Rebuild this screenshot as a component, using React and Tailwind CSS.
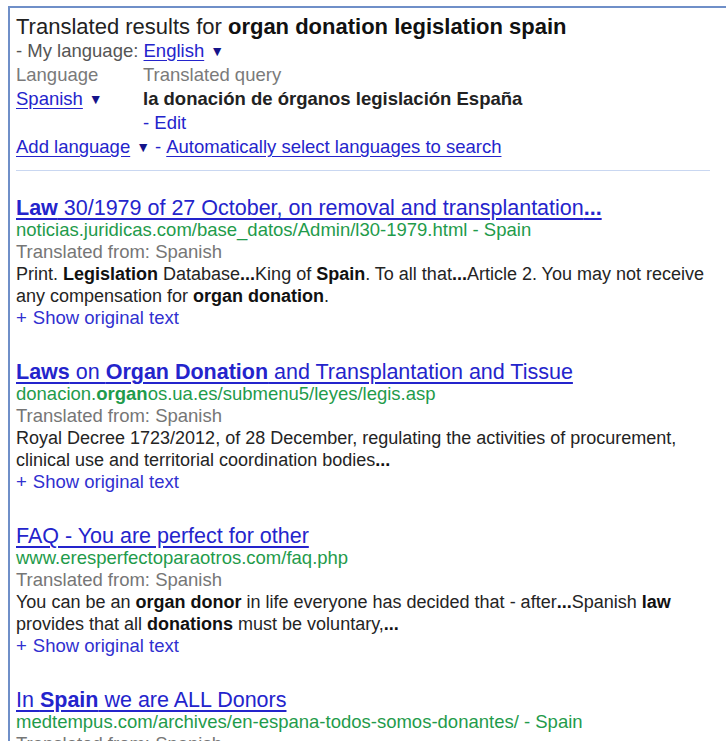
const results = [
  {
    title: [['Law', true], [' 30/1979 of 27 October, on removal and transplantation', false], ['...', true]],
    url: [['noticias.juridicas.com/base_datos/Admin/l30-1979.html - Spain', false]],
    snippet: [
      ['Print. ', false], ['Legislation', true], [' Database', false], ['...', true], ['King of ', false],
      ['Spain', true], ['. To all that', false], ['...', true], ['Article 2. You may not receive any compensation for ', false],
      ['organ donation', true], ['.', false],
    ],
  },
  {
    title: [['Laws', true], [' on ', false], ['Organ Donation', true], [' and Transplantation and Tissue', false]],
    url: [['donacion.', false], ['organ', true], ['os.ua.es/submenu5/leyes/legis.asp', false]],
    snippet: [
      ['Royal Decree 1723/2012, of 28 December, regulating the activities of procurement, clinical use and territorial coordination bodies', false],
      ['...', true],
    ],
  },
  {
    title: [['FAQ - You are perfect for other', false]],
    url: [['www.eresperfectoparaotros.com/faq.php', false]],
    snippet: [
      ['You can be an ', false], ['organ donor', true], [' in life everyone has decided that - after', false], ['...', true],
      ['Spanish ', false], ['law', true], [' provides that all ', false], ['donations', true], [' must be voluntary,', false], ['...', true],
    ],
  },
  {
    title: [['In ', false], ['Spain', true], [' we are ALL Donors', false]],
    url: [['medtempus.com/archives/en-espana-todos-somos-donantes/ - Spain', false]],
    snippet: [],
  },
];

function Runs({ parts, boldClass = 'font-bold' }) {
  return parts.map(([text, bold], i) =>
    bold ? <b key={i} className={boldClass}>{text}</b> : <span key={i}>{text}</span>
  );
}

function Caret() {
  return <span className="text-[14px] text-[#14148a] ml-[6px] align-[1px]">▼</span>;
}

function Result({ item, first }) {
  return (
    <div className={first ? 'mt-[26px]' : 'mt-[32px]'}>
      <a className="block text-[21.5px] leading-[22px] text-[#2424cc] underline underline-offset-[3px] whitespace-nowrap">
        <Runs parts={item.title} />
      </a>
      <div className="text-[#1f9b4b] whitespace-nowrap">
        <Runs parts={item.url} />
      </div>
      <div className="text-[#767676]">Translated from: Spanish</div>
      {item.snippet.length > 0 && (
        <div className="text-[18px] text-[#242424] pr-[14px]">
          <Runs parts={item.snippet} boldClass="font-bold text-[#111]" />
        </div>
      )}
      {item.snippet.length > 0 && (
        <div className="text-[#3030d0]">
          <span className="mr-[6px]">+</span>Show original text
        </div>
      )}
    </div>
  );
}

export default function App() {
  return (
    <div className="w-[726px] h-[741px] overflow-hidden bg-white pt-[6px] pl-[8px]">
      <div
        className="border-t-2 border-l-2 border-[#6f8fc8] pl-[6px] pt-[7px] h-full text-[18.5px] leading-[22px]"
        style={{ fontFamily: '"Liberation Sans", Arial, sans-serif' }}
      >
        {/* query header */}
        <div className="text-[22px] leading-[24px] text-[#222]">
          Translated results for <b className="font-bold text-[#111]">organ donation legislation spain</b>
        </div>
        <div className="leading-[23px] text-[#555]">
          - My language: <a className="text-[#2424cc] underline underline-offset-[3px]">English</a>
          <Caret />
        </div>
        <div className="flex leading-[24px]">
          <div className="w-[127px] shrink-0">
            <div className="text-[#7a7a7a]">Language</div>
            <div>
              <a className="text-[#2424cc] underline underline-offset-[3px]">Spanish</a>
              <Caret />
            </div>
          </div>
          <div>
            <div className="text-[#7a7a7a]">Translated query</div>
            <div className="font-bold text-[#222]">la donación de órganos legislación España</div>
            <div className="text-[#2424cc]">- Edit</div>
          </div>
        </div>
        <div className="leading-[24px] text-[#2424cc]">
          <a className="underline underline-offset-[3px]">Add language</a>
          <Caret />
          <span className="mx-[5px]">-</span>
          <a className="underline underline-offset-[3px]">Automatically select languages to search</a>
        </div>
        <div className="mt-[11px] mr-[16px] h-px bg-[#c9d7f1]" />

        {results.map((r, i) => (
          <Result key={i} item={r} first={i === 0} />
        ))}
      </div>
    </div>
  );
}
